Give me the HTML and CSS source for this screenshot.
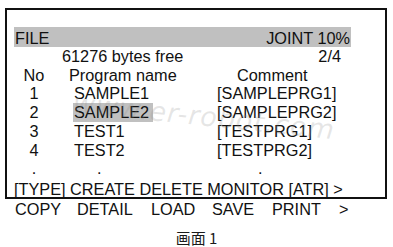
FILE: index.html
```html
<!DOCTYPE html>
<html lang="zh">
<head>
<meta charset="utf-8">
<title>FILE screen</title>
<link rel="stylesheet" href="styles.css">
</head>
<body>
<div class="figure">
  <div class="screen">
    <div class="titlebar"><span>FILE</span><span>JOINT 10%</span></div>
    <div class="info"><span>61276 bytes free</span><span>2/4</span></div>
    <div class="table">
      <div class="row head"><span class="no">No</span><span class="name">Program name</span><span class="comment">Comment</span></div>
      <div class="row"><span class="no">1</span><span class="name">SAMPLE1</span><span class="comment">[SAMPLEPRG1]</span></div>
      <div class="row"><span class="no">2</span><span class="name"><span class="sel">SAMPLE2</span></span><span class="comment">[SAMPLEPRG2]</span></div>
      <div class="row"><span class="no">3</span><span class="name">TEST1</span><span class="comment">[TESTPRG1]</span></div>
      <div class="row"><span class="no">4</span><span class="name">TEST2</span><span class="comment">[TESTPRG2]</span></div>
      <div class="row dots"><span class="no">.</span><span class="name">.</span><span class="comment">.</span></div>
    </div>
    <div class="funcs">[TYPE] CREATE DELETE MONITOR [ATR] &gt;</div>
    <div class="watermark">www.er-robot.com</div>
  </div>
  <div class="softkeys"><span>COPY</span><span>DETAIL</span><span>LOAD</span><span>SAVE</span><span>PRINT</span><span>&gt;</span></div>
  <div class="caption">画面 1</div>
</div>
</body>
</html>
```
FILE: styles.css
```css
html, body {
  margin: 0;
  padding: 0;
  background: #ffffff;
}
body {
  font-family: "Liberation Sans", Arial, sans-serif;
  font-size: 16.3px;
  color: #111;
  width: 393px;
  height: 247px;
  overflow: hidden;
}
.figure {
  padding-top: 8px;
}
.screen {
  position: relative;
  margin-left: 5px;
  width: 382px;
  height: 191px;
  box-sizing: border-box;
  border: 2px solid #111;
  padding: 17px 0 0 7px;
  line-height: 18.7px;
}
.titlebar {
  width: 337px;
  height: 20px;
  line-height: 20px;
  padding-top: 1px;
  box-sizing: border-box;
  background: #c0c0c0;
  display: flex;
  justify-content: space-between;
  padding-left: 1px;
  padding-right: 1px;
}
.info {
  width: 337px;
  box-sizing: border-box;
  display: flex;
  justify-content: space-between;
  padding-left: 48px;
  padding-right: 10px;
}
.row {
  display: grid;
  grid-template-columns: 40px 163px 1fr;
}
.no {
  text-align: center;
}
.name {
  padding-left: 20px;
}
.head .name {
  padding-left: 15px;
}
.comment {
  padding-left: 0;
}
.head .comment {
  padding-left: 20px;
}
.dots .name {
  padding-left: 43px;
}
.dots .comment {
  padding-left: 41px;
}
.sel {
  display: inline-block;
  background: #c0c0c0;
  margin-left: -1px;
  padding: 0 4px 0 1px;
}
.funcs {
  margin-top: 2.5px;
}
.softkeys {
  display: grid;
  grid-template-columns: 62px 74px 61px 60px 67px auto;
  padding-left: 15px;
  line-height: 18.7px;
  margin-top: 1px;
}
.caption {
  font-family: "Noto Sans CJK SC", "Liberation Sans", sans-serif;
  font-size: 15px;
  line-height: 16px;
  text-align: center;
  margin-top: 11px;
  color: #1a1a1a;
}
.watermark {
  position: absolute;
  left: 66px;
  top: 84px;
  font-family: "DejaVu Sans", sans-serif;
  font-size: 27px;
  font-style: italic;
  letter-spacing: 1px;
  color: rgba(140, 140, 140, 0.22);
  transform: rotate(6deg);
  transform-origin: left center;
  pointer-events: none;
  white-space: nowrap;
}
```
